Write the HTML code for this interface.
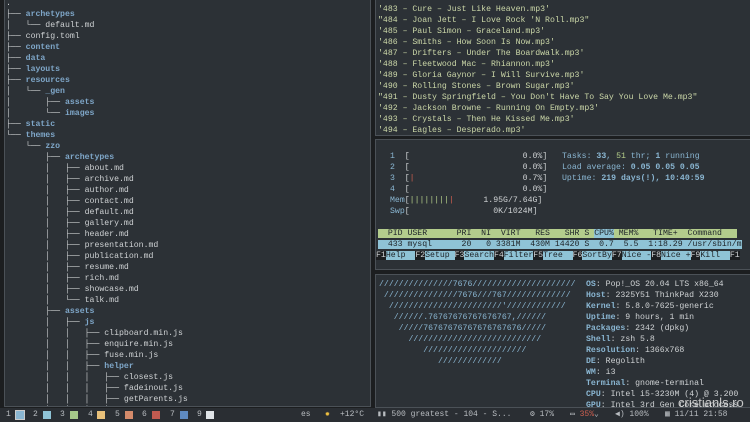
<!DOCTYPE html>
<html><head><meta charset="utf-8"><style>
*{margin:0;padding:0;box-sizing:border-box}
body{width:750px;height:422px;overflow:hidden;background:#1c1e20;position:relative;font-family:"Liberation Mono","DejaVu Sans Mono",monospace;font-size:8.2px;color:#cfd2d4}
.pane{position:absolute;background:#2c3136;border:1px solid #4b5157;overflow:hidden}
pre{position:absolute;font-family:inherit;font-size:8.2px;line-height:11px;white-space:pre}
.d{color:#7fa7c9;font-weight:bold}
.g{color:#cbd7a8}
.b{color:#8ab6d2;font-weight:bold}
.k{color:#8ab6d2}
.y{color:#b5cf8a}
.r{color:#d06050}
.hdr{background:#b3cc8c;color:#20262a}
.sel{background:#8fc3d6;color:#20262a}
.fk{background:#8fc3d6;color:#20262a}
.fn{background:#1c1e20;color:#cfd2d4}
#bar{position:absolute;left:0;top:408px;width:750px;height:14px;background:#2a2e33;font-size:8px;line-height:14px;color:#b8bcc0}
.ws{position:absolute;top:3px;width:8px;height:8px}
</style></head><body>

<div class="pane" style="left:4px;top:-1px;width:367px;height:408px">
<pre style="left:1px;top:-2px">.
├── <span class="d">archetypes</span>
│   └── default.md
├── config.toml
├── <span class="d">content</span>
├── <span class="d">data</span>
├── <span class="d">layouts</span>
├── <span class="d">resources</span>
│   └── <span class="d">_gen</span>
│       ├── <span class="d">assets</span>
│       └── <span class="d">images</span>
├── <span class="d">static</span>
└── <span class="d">themes</span>
    └── <span class="d">zzo</span>
        ├── <span class="d">archetypes</span>
        │   ├── about.md
        │   ├── archive.md
        │   ├── author.md
        │   ├── contact.md
        │   ├── default.md
        │   ├── gallery.md
        │   ├── header.md
        │   ├── presentation.md
        │   ├── publication.md
        │   ├── resume.md
        │   ├── rich.md
        │   ├── showcase.md
        │   └── talk.md
        ├── <span class="d">assets</span>
        │   ├── <span class="d">js</span>
        │   │   ├── clipboard.min.js
        │   │   ├── enquire.min.js
        │   │   ├── fuse.min.js
        │   │   ├── <span class="d">helper</span>
        │   │   │   ├── closest.js
        │   │   │   ├── fadeinout.js
        │   │   │   ├── getParents.js
        │   │   │   │</pre>
</div>

<div class="pane" style="left:375px;top:-1px;width:376px;height:137px">
<pre class="g" style="left:2px;top:4px">'483 – Cure – Just Like Heaven.mp3'
"484 – Joan Jett – I Love Rock 'N Roll.mp3"
'485 – Paul Simon – Graceland.mp3'
'486 – Smiths – How Soon Is Now.mp3'
'487 – Drifters – Under The Boardwalk.mp3'
'488 – Fleetwood Mac – Rhiannon.mp3'
'489 – Gloria Gaynor – I Will Survive.mp3'
'490 – Rolling Stones – Brown Sugar.mp3'
"491 – Dusty Springfield – You Don't Have To Say You Love Me.mp3"
'492 – Jackson Browne – Running On Empty.mp3'
'493 – Crystals – Then He Kissed Me.mp3'
'494 – Eagles – Desperado.mp3'</pre>
</div>

<div class="pane" style="left:375px;top:139px;width:376px;height:131px;background:#2c3136">
<pre style="left:14px;top:11px"><span class="k">1</span>  [                       0.0%]
<span class="k">2</span>  [                       0.0%]
<span class="k">3</span>  [<span class="r">|</span>                      0.7%]
<span class="k">4</span>  [                       0.0%]
<span class="k">Mem</span>[<span class="y">||||||||</span><span class="r">|</span>      1.95G/7.64G]
<span class="k">Swp</span>[                 0K/1024M]</pre>
<pre style="left:186px;top:11px"><span class="k">Tasks: </span><span class="b">33</span><span class="k">, </span><span class="y">51</span><span class="k"> thr; </span><span class="b">1</span><span class="k"> running</span>
<span class="k">Load average: </span><span class="b">0.05 0.05 0.05</span>
<span class="k">Uptime: </span><span class="b">219 days(!), 10:40:59</span></pre>
<pre style="left:2px;top:88px;width:372px"><span class="hdr">  PID USER      PRI  NI  VIRT   RES   SHR S </span><span class="sel">CPU%</span><span class="hdr"> MEM%   TIME+  Command   </span>
<span class="sel">  433 mysql      20   0 3381M  430M 14420 S  0.7  5.5  1:18.29 /usr/sbin/m</span></pre>
<pre style="left:0;top:110px"><span class="fn">F1</span><span class="fk">Help  </span><span class="fn">F2</span><span class="fk">Setup </span><span class="fn">F3</span><span class="fk">Search</span><span class="fn">F4</span><span class="fk">Filter</span><span class="fn">F5</span><span class="fk">Tree  </span><span class="fn">F6</span><span class="fk">SortBy</span><span class="fn">F7</span><span class="fk">Nice -</span><span class="fn">F8</span><span class="fk">Nice +</span><span class="fn">F9</span><span class="fk">Kill  </span><span class="fn">F1</span></pre>
</div>

<div class="pane" style="left:375px;top:274px;width:376px;height:134px">
<pre class="k" style="left:3px;top:4px">///////////////7676/////////////////////
 ///////////////7676///767/////////////
  ///////////////////////'////////////
   //////.76767676767676767,//////
    /////76767676767676767676/////
      ///////////////////////////
         /////////////////////
            /////////////</pre>
<pre style="left:210px;top:4px"><span class="b">OS</span>: Pop!_OS 20.04 LTS x86_64
<span class="b">Host</span>: 2325Y51 ThinkPad X230
<span class="b">Kernel</span>: 5.8.0-7625-generic
<span class="b">Uptime</span>: 9 hours, 1 min
<span class="b">Packages</span>: 2342 (dpkg)
<span class="b">Shell</span>: zsh 5.8
<span class="b">Resolution</span>: 1366x768
<span class="b">DE</span>: Regolith
<span class="b">WM</span>: i3
<span class="b">Terminal</span>: gnome-terminal
<span class="b">CPU</span>: Intel i5-3230M (4) @ 3.200
<span class="b">GPU</span>: Intel 3rd Gen Core process</pre>
</div>

<div id="bar">
<span style="position:absolute;left:6px">1</span><div class="ws" style="left:16px;background:#8ab6d2;outline:1px solid #ccc"></div>
<span style="position:absolute;left:33px">2</span><div class="ws" style="left:43px;background:#8fc3d6"></div>
<span style="position:absolute;left:60px">3</span><div class="ws" style="left:70px;background:#a6c98a"></div>
<span style="position:absolute;left:88px">4</span><div class="ws" style="left:97px;background:#e8c07a"></div>
<span style="position:absolute;left:115px">5</span><div class="ws" style="left:125px;background:#d48a6a"></div>
<span style="position:absolute;left:142px">6</span><div class="ws" style="left:152px;background:#c05a50"></div>
<span style="position:absolute;left:170px">7</span><div class="ws" style="left:180px;background:#5f8ac0"></div>
<span style="position:absolute;left:197px">9</span><div class="ws" style="left:206px;background:#e0e4e8"></div>
<span style="position:absolute;left:301px">es</span>
<span style="position:absolute;left:325px;color:#f0c040">✹</span>
<span style="position:absolute;left:340px">+12°C</span>
<span style="position:absolute;left:377px">▮▮ 500 greatest - 104 - S...</span>
<span style="position:absolute;left:530px">⚙ 17%</span>
<span style="position:absolute;left:570px">▭ <span style="color:#d06050">35%</span>⌄</span>
<span style="position:absolute;left:615px">◀) 100%</span>
<span style="position:absolute;left:665px">▦ 11/11 21:58</span>
<span style="position:absolute;left:678px;top:-12px;font-family:'Liberation Sans',sans-serif;font-size:13px;color:#e0e0e0;opacity:.85;white-space:nowrap">cristianls.ro</span>
</div>
</body></html>
